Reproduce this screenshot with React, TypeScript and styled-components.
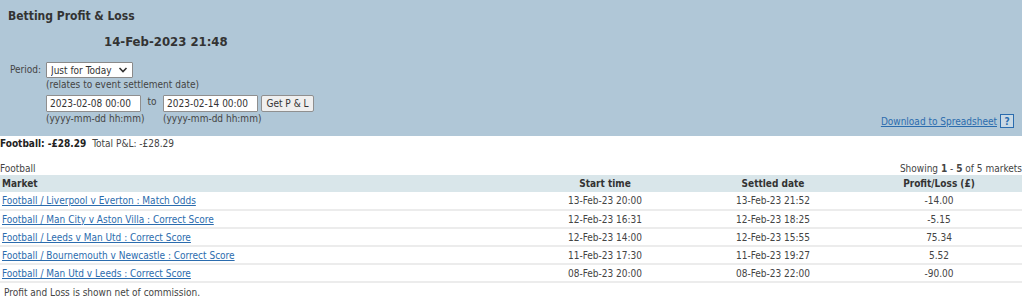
import React from "react";
import styled, { createGlobalStyle } from "styled-components";

const FONT = `"DejaVu Sans Condensed", "Liberation Sans", Arial, sans-serif`;

const Global = createGlobalStyle`
  html, body { margin: 0; padding: 0; background: #fff; }
  body { font-family: ${FONT}; font-size: 10px; color: #333; }
  * { box-sizing: border-box; }
`;

const Page = styled.div`
  width: 1024px;
  display: flex;
  flex-direction: column;
`;

const Panel = styled.div`
  width: 1022px;
  height: 136px;
  background: #b0c7d7;
  padding: 8px 8px 0 8px;
  display: flex;
  flex-direction: column;
`;

const Title = styled.h1`
  margin: 0;
  font-size: 12px;
  line-height: 16px;
  font-weight: bold;
  color: #333;
`;

const DateLine = styled.div`
  margin: 10px 0 0 96px;
  font-size: 13px;
  line-height: 16px;
  font-weight: bold;
  color: #333;
`;

const BottomRow = styled.div`
  flex: 1;
  margin-top: 12px;
  display: flex;
  justify-content: space-between;
  align-items: flex-end;
`;

const Form = styled.div`
  align-self: flex-start;
  display: grid;
  grid-template-columns: 36px auto;
  margin-left: 2px;
`;

const Label = styled.div`
  line-height: 16px;
  color: #444;
`;

const Col = styled.div`
  display: flex;
  flex-direction: column;
`;

const Select = styled.select`
  appearance: none;
  width: 87px;
  height: 16px;
  padding: 0 0 0 4px;
  font-family: ${FONT};
  font-size: 10px;
  color: #333;
  background: #fff url("data:image/svg+xml;utf8,<svg xmlns='http://www.w3.org/2000/svg' width='10' height='8' viewBox='0 0 10 8'><path d='M1.5 2 L5 5.5 L8.5 2' fill='none' stroke='%23333' stroke-width='1.6'/></svg>") no-repeat right 4px center;
  border: 1px solid #8a8a8a;
  border-radius: 1px;
  outline: none;
`;

const Hint = styled.div`
  line-height: 12px;
  margin-top: 1px;
  color: #444;
  white-space: nowrap;
`;

const DateRow = styled.div`
  display: flex;
  align-items: flex-start;
  margin-top: 4px;
`;

const DateField = styled.div`
  width: 95px;
  display: flex;
  flex-direction: column;
`;

const Input = styled.input`
  width: 95px;
  height: 17px;
  padding: 0 3px;
  font-family: ${FONT};
  font-size: 10px;
  color: #333;
  background: #fff;
  border: 1px solid #8f8f8f;
  border-radius: 1px;
  outline: none;
`;

const To = styled.span`
  width: 22px;
  text-align: center;
  line-height: 14px;
  color: #444;
`;

const Button = styled.button`
  margin-left: 3px;
  height: 17px;
  width: 53px;
  padding: 0;
  font-family: ${FONT};
  font-size: 10px;
  color: #333;
  background: #efefef;
  border: 1px solid #8f8f8f;
  border-radius: 2px;
`;

const Download = styled.div`
  display: flex;
  align-items: center;
  gap: 3px;
  margin-bottom: 8px;
`;

const Link = styled.a`
  color: #2b6cae;
  text-decoration: underline;
  cursor: pointer;
`;

const Help = styled.span`
  display: inline-flex;
  align-items: center;
  justify-content: center;
  width: 14px;
  height: 14px;
  border: 1px solid #2b6cae;
  background: #c9d9e5;
  color: #2b6cae;
  font-weight: bold;
  font-size: 10px;
`;

const Summary = styled.div`
  margin-top: 2px;
  line-height: 12px;
  color: #444;
`;

const Strong = styled.b`
  color: #222;
  margin-right: 6px;
`;

const Caption = styled.div`
  width: 1022px;
  margin-top: 13px;
  display: flex;
  justify-content: space-between;
  line-height: 12px;
  color: #444;
`;

const Table = styled.table`
  width: 1022px;
  border-collapse: collapse;
  table-layout: fixed;
`;

const Th = styled.th<{ $w?: number; $align?: string }>`
  width: ${(p) => (p.$w ? `${p.$w}px` : "auto")};
  text-align: ${(p) => p.$align || "center"};
  background: #d9e6ea;
  height: 17px;
  padding: 0 2px;
  font-weight: bold;
  color: #333;
`;

const Td = styled.td<{ $align?: string }>`
  text-align: ${(p) => p.$align || "center"};
  height: 18px;
  padding: 0 2px;
  border-bottom: 2px solid #ececec;
  color: #444;
  white-space: nowrap;
`;

const RowLink = styled.a`
  color: #2b6cae;
  text-decoration: underline;
`;

const Note = styled.div`
  margin: 4px 0 0 4px;
  line-height: 12px;
  color: #444;
`;

const rows = [
  ["Football / Liverpool v Everton : Match Odds", "13-Feb-23 20:00", "13-Feb-23 21:52", "-14.00"],
  ["Football / Man City v Aston Villa : Correct Score", "12-Feb-23 16:31", "12-Feb-23 18:25", "-5.15"],
  ["Football / Leeds v Man Utd : Correct Score", "12-Feb-23 14:00", "12-Feb-23 15:55", "75.34"],
  ["Football / Bournemouth v Newcastle : Correct Score", "11-Feb-23 17:30", "11-Feb-23 19:27", "5.52"],
  ["Football / Man Utd v Leeds : Correct Score", "08-Feb-23 20:00", "08-Feb-23 22:00", "-90.00"],
];

export default function App() {
  return (
    <Page>
      <Global />
      <Panel>
        <Title>Betting Profit &amp; Loss</Title>
        <DateLine>14-Feb-2023 21:48</DateLine>
        <BottomRow>
          <Form>
            <Label>Period:</Label>
            <Col>
              <Select defaultValue="today">
                <option value="today">Just for Today</option>
              </Select>
              <Hint>(relates to event settlement date)</Hint>
              <DateRow>
                <DateField>
                  <Input defaultValue="2023-02-08 00:00" />
                  <Hint>(yyyy-mm-dd hh:mm)</Hint>
                </DateField>
                <To>to</To>
                <DateField>
                  <Input defaultValue="2023-02-14 00:00" />
                  <Hint>(yyyy-mm-dd hh:mm)</Hint>
                </DateField>
                <Button>Get P &amp; L</Button>
              </DateRow>
            </Col>
          </Form>
          <Download>
            <Link>Download to Spreadsheet</Link>
            <Help>?</Help>
          </Download>
        </BottomRow>
      </Panel>
      <Summary>
        <Strong>Football: -£28.29</Strong>Total P&amp;L: -£28.29
      </Summary>
      <Caption>
        <span>Football</span>
        <span>
          Showing <b>1</b> - <b>5</b> of 5 markets
        </span>
      </Caption>
      <Table>
        <thead>
          <tr>
            <Th $w={520} $align="left">Market</Th>
            <Th $w={170}>Start time</Th>
            <Th $w={166}>Settled date</Th>
            <Th>Profit/Loss (£)</Th>
          </tr>
        </thead>
        <tbody>
          {rows.map((r) => (
            <tr key={r[0]}>
              <Td $align="left">
                <RowLink>{r[0]}</RowLink>
              </Td>
              <Td>{r[1]}</Td>
              <Td>{r[2]}</Td>
              <Td>{r[3]}</Td>
            </tr>
          ))}
        </tbody>
      </Table>
      <Note>Profit and Loss is shown net of commission.</Note>
    </Page>
  );
}
